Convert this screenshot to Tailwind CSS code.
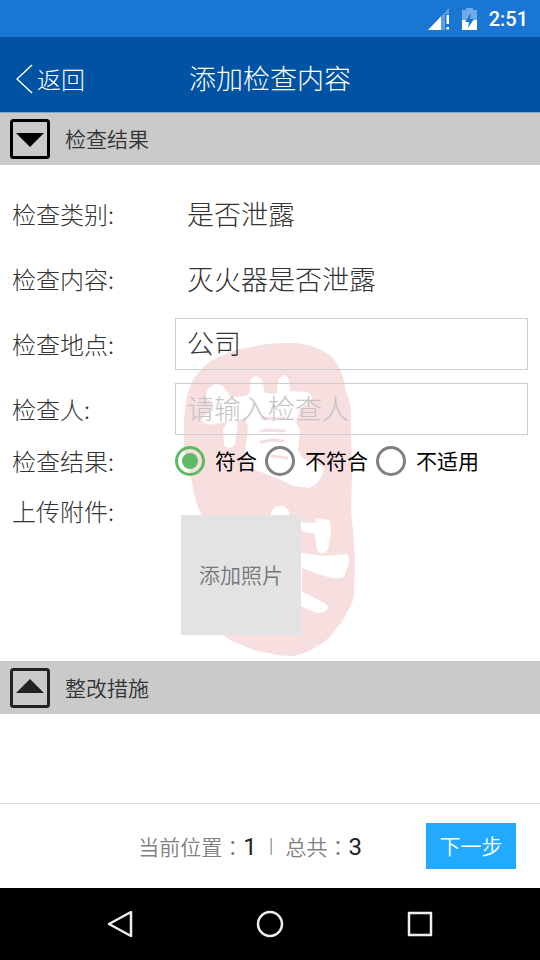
<!DOCTYPE html>
<html lang="zh-CN">
<head>
    <meta charset="UTF-8">
    <meta name="viewport" content="width=device-width, initial-scale=1.0">
    <title>添加检查内容</title>
    <script src="https://cdn.jsdelivr.net/npm/@tailwindcss/browser@4"></script>
</head>
<body class="flex min-h-screen flex-col bg-white font-['Noto_Sans_CJK_SC',sans-serif] font-light text-[#333]">
    <!-- Status bar -->
    <div class="flex h-[37px] items-center justify-end gap-3 bg-[#1976d2] px-3 text-white">
        <svg class="h-[22px] w-[22px]" viewBox="0 0 22 22" aria-hidden="true">
            <path d="M21 0v22H0z" fill="#5e9fe0"/>
            <path d="M13 8.5V22H0z" fill="#fff"/>
            <path d="M17 6h5v16h-5z" fill="#1976d2"/>
            <path d="M18.500 7h2.500v9h-2.500zM18.500 19h2.500v2.500h-2.500z" fill="#fff"/>
        </svg>
        <svg class="h-[22px] w-[15px]" viewBox="0 0 15 22" aria-hidden="true">
            <path d="M4 0h7v2h4v10H0V2h4z" fill="#6eaae6"/>
            <path d="M0 12h15v10H0z" fill="#fff"/>
            <path d="M9 5L3 14h4l-1 6 6-9H8z" fill="#1976d2"/>
        </svg>
        <span class="pt-px font-['Roboto',sans-serif] text-xl font-medium">2:51</span>
    </div>

    <!-- Title bar -->
    <header class="grid h-[76px] grid-cols-3 items-center border-b border-[#7fa8d0] bg-[#0052a2] px-4 pt-2 text-white">
        <a href="#" class="flex items-center gap-1 text-2xl">
            <svg class="h-[30px] w-[17px]" viewBox="0 0 17 30" fill="none" stroke="currentColor" stroke-width="1.5" aria-hidden="true">
                <path d="M16 1L1 15l15 14"/>
            </svg>
            返回
        </a>
        <h1 class="text-center text-[27px] whitespace-nowrap">添加检查内容</h1>
    </header>

    <form class="flex flex-1 flex-col">
        <button type="button" class="flex h-[52px] items-center gap-[15px] bg-[#cacaca] px-[10px] text-[21px] font-[350]">
            <svg class="size-10" viewBox="0 0 40 40" aria-hidden="true">
                <rect x="1.5" y="1.5" width="37" height="37" rx="2" fill="none" stroke="#000" stroke-width="3"/>
                <path d="M6 14h28L20 28z" fill="#000"/>
            </svg>
            检查结果
        </button>

        <section class="relative flex flex-col px-3 pt-[23px] pb-[26px]">
            <!-- Seal watermark -->
            <svg class="absolute top-[178px] left-1/2 h-[313px] w-[172px] -translate-x-1/2" viewBox="185 343 172 313" aria-hidden="true">
                <path fill="#f7dfe0" d="M283 343Q302 342 317 348Q330 352 337 362Q345 374 347 392Q353 404 352 425L353 475L352 510L354 532L356 557L355 593Q355 602 348 612Q344 622 337 629Q330 640 317 647Q305 655 293 656Q280 656 270 653Q255 652 243 645Q230 641 223 634Q208 590 206 540L202 514Q195 500 193 482L185 450Q183 420 188 397Q192 380 200 372Q208 362 220 357Q235 349 253 347Q268 343 283 343z"/>
                <g fill="#fff">
                    <path d="M208 390Q216 381 224 386L232 397L247 396Q253 394 251 381Q256 372 263 380L266 393L278 394Q278 378 284 375Q291 374 291 391L308 392Q314 395 313 401L301 408L297 423L301 430L299 450L304 459Q324 463 325 470Q321 484 310 488L295 486L277 478L252 468L246 452L249 429L247 418L239 420L236 445Q231 450 225 446L224 430L229 421L216 424Q208 426 203 421Q202 417 214 410L214 403L207 398z"/>
                    <path d="M271 515Q273 506 282 506Q290 507 291 515L302 522L317 523L316 519Q322 517 331 521L332 530L329 550Q323 557 318 550L316 534L302 531V553L326 556L348 554Q352 557 349 566L345 577Q336 580 322 575L303 568V592L318 599Q329 604 329 608Q325 615 315 612L302 606L275 600z"/>
                </g>
                <g fill="none" stroke="#f7dfe0" stroke-width="3" stroke-linecap="round">
                    <path d="M263 418l10 1 12-1M262 431l8-1 15 1M262 442l12-2 10 1M273 456l15 2"/>
                </g>
            </svg>

            <div class="relative flex flex-col gap-[13px]">
                <div class="flex h-[52px] items-center">
                    <span class="w-[163px] text-2xl">检查类别:</span>
                    <span class="flex-1 px-3 text-[27px]">是否泄露</span>
                </div>
                <div class="flex h-[52px] items-center">
                    <span class="w-[163px] text-2xl">检查内容:</span>
                    <span class="flex-1 px-3 text-[27px]">灭火器是否泄露</span>
                </div>
                <div class="flex h-[52px] items-center">
                    <label for="place" class="w-[163px] text-2xl">检查地点:</label>
                    <input id="place" type="text" value="公司" class="h-full min-w-0 flex-1 border border-[#ccc] px-[11px] pb-[3px] text-[27px]">
                </div>
                <div class="flex h-[52px] items-center">
                    <label for="inspector" class="w-[163px] text-2xl">检查人:</label>
                    <input id="inspector" type="text" placeholder="请输入检查人" class="h-full min-w-0 flex-1 border border-[#ccc] px-[11px] pb-[3px] text-[27px] placeholder:text-[#c4c4c4]">
                </div>
            </div>

            <div role="radiogroup" aria-labelledby="resultLabel" class="relative flex h-[52px] items-center">
                <span id="resultLabel" class="w-[163px] text-2xl">检查结果:</span>
                <div class="flex gap-2 text-[21px] font-normal whitespace-nowrap text-black">
                    <label class="flex items-center gap-[10px]">
                        <input type="radio" name="result" value="ok" checked class="size-[30px] appearance-none rounded-full border-3 border-[#808080] bg-clip-content p-1 checked:border-[#5fba65] checked:bg-[#5fba65]">
                        符合
                    </label>
                    <label class="flex items-center gap-[10px]">
                        <input type="radio" name="result" value="fail" class="size-[30px] appearance-none rounded-full border-3 border-[#808080] bg-clip-content p-1 checked:border-[#5fba65] checked:bg-[#5fba65]">
                        不符合
                    </label>
                    <label class="flex items-center gap-[10px]">
                        <input type="radio" name="result" value="na" class="size-[30px] appearance-none rounded-full border-3 border-[#808080] bg-clip-content p-1 checked:border-[#5fba65] checked:bg-[#5fba65]">
                        不适用
                    </label>
                </div>
            </div>

            <div class="relative flex">
                <span class="flex h-12 w-[169px] items-center text-2xl">上传附件:</span>
                <button type="button" class="mt-7 size-[120px] bg-[#e3e3e3] text-[21px] font-[350] text-[#777]">添加照片</button>
            </div>
        </section>

        <button type="button" class="flex h-[53px] items-center gap-[15px] bg-[#cacaca] px-[10px] text-[21px] font-[350]">
            <svg class="size-10" viewBox="0 0 40 40" aria-hidden="true">
                <rect x="1.5" y="1.5" width="37" height="37" rx="2" fill="none" stroke="#222" stroke-width="3"/>
                <path d="M6 25h28L20 11z" fill="#222"/>
            </svg>
            整改措施
        </button>

        <footer class="mt-auto flex h-[85px] items-center border-t border-[#ddd] pr-6">
            <p class="flex flex-1 items-center justify-end pr-16 pt-px text-[21px] font-[350] whitespace-nowrap text-[#808080]">
                当前位置<span class="font-['Noto_Sans_CJK_TC',sans-serif]">：</span><span class="font-['Roboto',sans-serif] text-2xl font-normal text-[#222]">1</span>
                <span class="mx-3 font-['Roboto',sans-serif]">|</span>
                总共<span class="font-['Noto_Sans_CJK_TC',sans-serif]">：</span><span class="font-['Roboto',sans-serif] text-2xl font-normal text-[#222]">3</span>
            </p>
            <button type="submit" class="h-[46px] w-[90px] bg-[#22abfe] text-[21px] font-[350] text-white">下一步</button>
        </footer>
    </form>

    <!-- Navigation bar -->
    <nav class="flex h-[72px] items-center justify-center gap-[122px] bg-black text-[#eee]">
        <button type="button" aria-label="后退">
            <svg class="size-7" viewBox="0 0 28 28" fill="none" stroke="currentColor" stroke-width="2.5" stroke-linejoin="round">
                <path d="M3 14L25 2v24z"/>
            </svg>
        </button>
        <button type="button" aria-label="主屏幕">
            <svg class="size-7" viewBox="0 0 28 28" fill="none" stroke="currentColor" stroke-width="2.5">
                <circle cx="14" cy="14" r="12"/>
            </svg>
        </button>
        <button type="button" aria-label="最近任务">
            <svg class="size-7" viewBox="0 0 28 28" fill="none" stroke="currentColor" stroke-width="2.5" stroke-linejoin="round">
                <rect x="3" y="3" width="22" height="22"/>
            </svg>
        </button>
    </nav>
</body>
</html>
